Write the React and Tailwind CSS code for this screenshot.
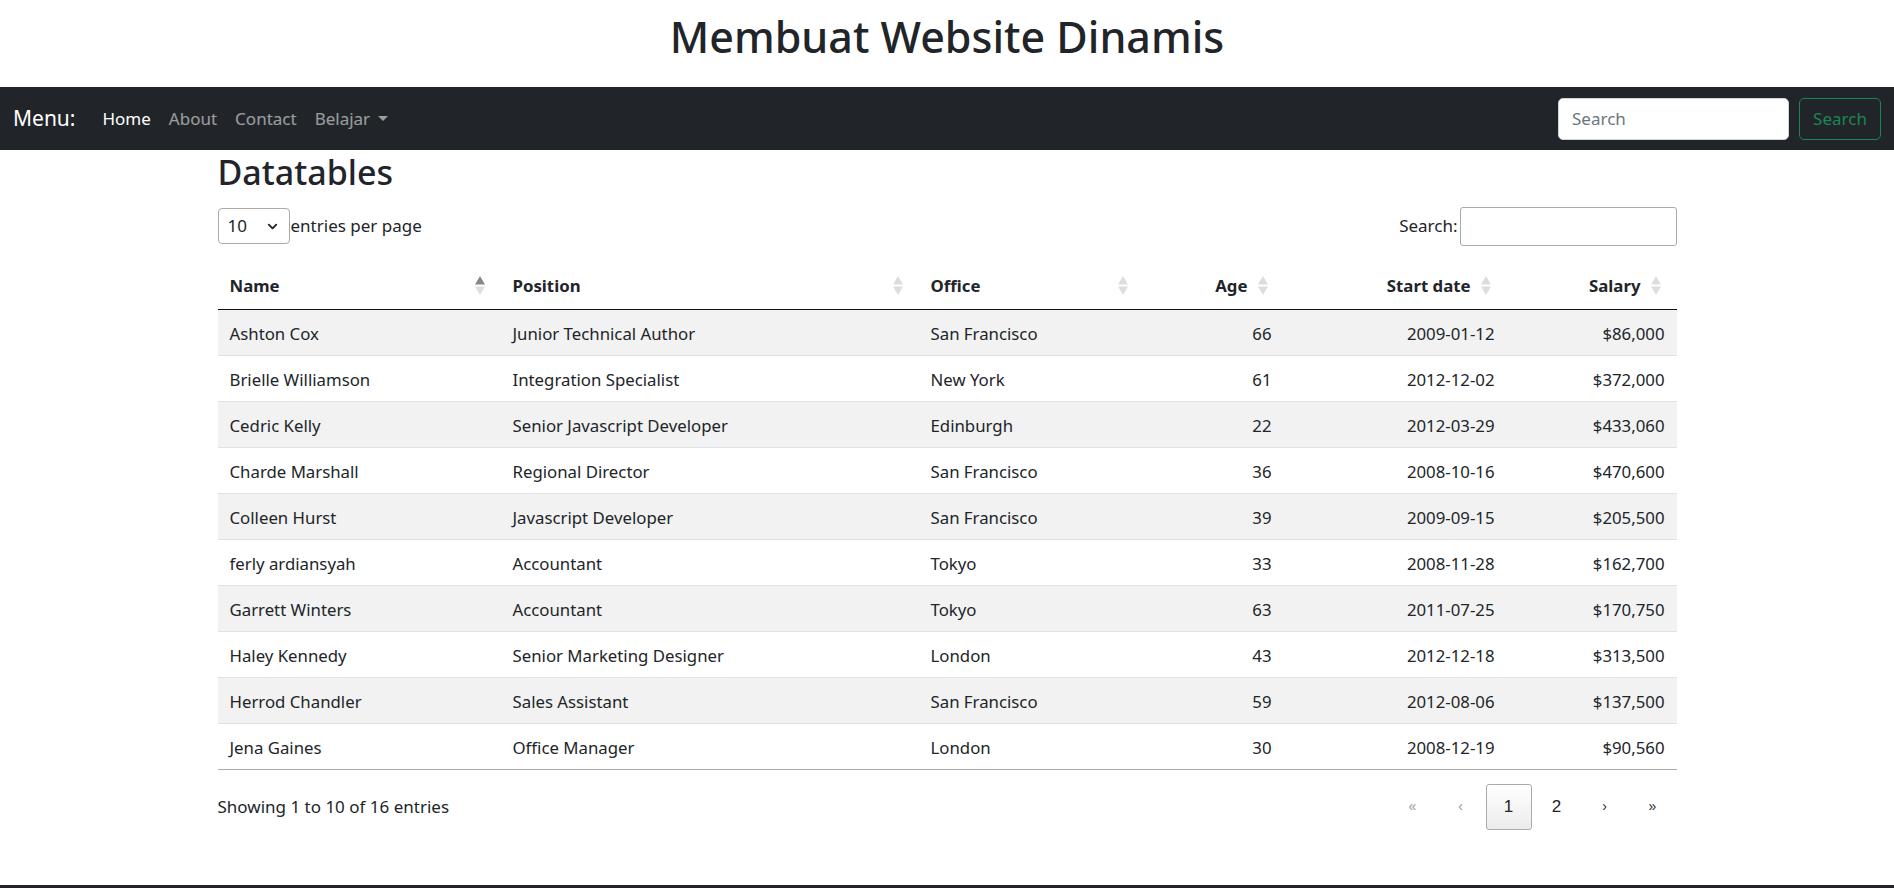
import { ChevronDown } from "lucide-react";

const ROWS = [
  ["Ashton Cox", "Junior Technical Author", "San Francisco", 66, "2009-01-12", "$86,000"],
  ["Brielle Williamson", "Integration Specialist", "New York", 61, "2012-12-02", "$372,000"],
  ["Cedric Kelly", "Senior Javascript Developer", "Edinburgh", 22, "2012-03-29", "$433,060"],
  ["Charde Marshall", "Regional Director", "San Francisco", 36, "2008-10-16", "$470,600"],
  ["Colleen Hurst", "Javascript Developer", "San Francisco", 39, "2009-09-15", "$205,500"],
  ["ferly ardiansyah", "Accountant", "Tokyo", 33, "2008-11-28", "$162,700"],
  ["Garrett Winters", "Accountant", "Tokyo", 63, "2011-07-25", "$170,750"],
  ["Haley Kennedy", "Senior Marketing Designer", "London", 43, "2012-12-18", "$313,500"],
  ["Herrod Chandler", "Sales Assistant", "San Francisco", 59, "2012-08-06", "$137,500"],
  ["Jena Gaines", "Office Manager", "London", 30, "2008-12-19", "$90,560"],
];

// little up/down diamond used by simple-datatables
const Sorter = ({ active }) => (
  <svg width="10" height="19" viewBox="0 0 10 19" className="shrink-0">
    <path d="M5 0 L10 8.5 L0 8.5 Z" fill={active ? "#888" : "#ddd"} />
    <path d="M0 10.5 L10 10.5 L5 19 Z" fill="#ddd" />
  </svg>
);

const cols = [
  { label: "Name", w: "w-[283px]", right: false, active: true },
  { label: "Position", w: "w-[418px]", right: false },
  { label: "Office", w: "w-[225px]", right: false },
  { label: "Age", w: "w-[140px]", right: true },
  { label: "Start date", w: "w-[223px]", right: true },
  { label: "Salary", w: "w-[170px]", right: true },
];

export default function App() {
  return (
    <div className="min-h-[888px] bg-white text-[#212529] font-['Noto_Sans',sans-serif] flex flex-col">
      <h1 className="h-[87px] flex items-center justify-center text-[43px] font-medium leading-none pb-[14px]">
        Membuat Website Dinamis
      </h1>

      <nav className="h-[63px] bg-[#212529] flex items-center pl-[13px] pr-[13px]">
        <span className="text-white text-[21px] mr-[27px]">Menu:</span>
        <div className="flex items-center gap-[18px] text-[17px]">
          <a className="text-white">Home</a>
          <a className="text-white/55">About</a>
          <a className="text-white/55">Contact</a>
          <a className="text-white/55 flex items-center gap-[8px]">
            Belajar
            <span className="w-0 h-0 border-l-[5px] border-r-[5px] border-t-[5px] border-l-transparent border-r-transparent border-t-white/55" />
          </a>
        </div>
        <div className="ml-auto flex items-center gap-[10px]">
          <div className="w-[231px] h-[42px] bg-white rounded-[5px] border border-[#ced4da] flex items-center px-[13px] text-[17px] text-[#6c757d]">
            Search
          </div>
          <button className="w-[82px] h-[42px] rounded-[5px] border border-[#198754] text-[#198754] text-[17px]">
            Search
          </button>
        </div>
      </nav>

      <main className="w-[1459px] mx-auto flex-1">
        <h2 className="text-[34px] font-medium leading-none mt-[5px] mb-[16px]">Datatables</h2>

        <div className="flex items-center justify-between h-[40px] text-[17px] pt-[2px]">
          <div className="flex items-center">
            <div className="w-[72px] h-[36px] border border-[#aaa] rounded-[4px] flex items-center justify-between px-[9px] text-[17px]">
              <span>10</span>
              <ChevronDown size={15} strokeWidth={3} />
            </div>
            <span className="ml-[1px]">entries per page</span>
          </div>
          <div className="flex items-center gap-[2px]">
            <span>Search:</span>
            <div className="w-[217px] h-[39px] border border-[#aaa] rounded-[3px]" />
          </div>
        </div>

        <table className="mt-[18px] w-full border-collapse text-[16.8px] table-fixed">
          <thead>
            <tr className="h-[46px] border-b border-[#111]">
              {cols.map((c) => (
                <th key={c.label} className={`${c.w} pl-[12px] pr-[16px] font-bold`}>
                  <div className={`flex items-center gap-[10px] ${c.right ? "justify-end" : "justify-between"}`}>
                    <span>{c.label}</span>
                    <Sorter active={c.active} />
                  </div>
                </th>
              ))}
            </tr>
          </thead>
          <tbody>
            {ROWS.map((r, i) => (
              <tr
                key={r[0]}
                className={`h-[46px] ${i % 2 === 0 ? "bg-[#f2f2f2]" : "bg-white"} ${i === ROWS.length - 1 ? "border-b border-[#aaa]" : "border-b border-[#dee2e6]"}`}
              >
                <td className="px-[12px] pt-[3px]">{r[0]}</td>
                <td className="px-[12px] pt-[3px]">{r[1]}</td>
                <td className="px-[12px] pt-[3px]">{r[2]}</td>
                <td className="px-[12px] pt-[3px] text-right">{r[3]}</td>
                <td className="px-[12px] pt-[3px] text-right">{r[4]}</td>
                <td className="px-[12px] pt-[3px] text-right">{r[5]}</td>
              </tr>
            ))}
          </tbody>
        </table>

        <div className="flex items-center justify-between mt-[14px] text-[17px]">
          <span>Showing 1 to 10 of 16 entries</span>
          <ul className="flex items-center font-['Liberation_Sans',sans-serif] text-[17px]">
            <li className="w-[46px] h-[46px] mx-[1px] flex items-center justify-center text-[#999] text-[14px]">«</li>
            <li className="w-[46px] h-[46px] mx-[1px] flex items-center justify-center text-[#999] text-[14px]">‹</li>
            <li className="w-[46px] h-[46px] mx-[1px] flex items-center justify-center border border-[#aaa] rounded-[3px] bg-gradient-to-b from-white to-[#ececec]">1</li>
            <li className="w-[46px] h-[46px] mx-[1px] flex items-center justify-center">2</li>
            <li className="w-[46px] h-[46px] mx-[1px] flex items-center justify-center text-[14px]">›</li>
            <li className="w-[46px] h-[46px] mx-[1px] flex items-center justify-center text-[14px]">»</li>
          </ul>
        </div>
      </main>

      <footer className="h-[3px] bg-[#212529]" />
    </div>
  );
}
